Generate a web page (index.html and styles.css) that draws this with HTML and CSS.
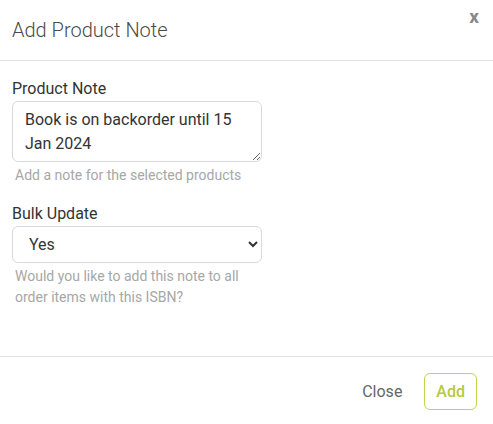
FILE: index.html
```html
<!DOCTYPE html>
<html lang="en">
<head>
<meta charset="utf-8">
<title>Add Product Note</title>
<link rel="stylesheet" href="styles.css">
</head>
<body>
<div class="modal">
  <div class="modal-header">
    <h4 class="modal-title">Add Product Note</h4>
    <button class="close" type="button">x</button>
  </div>
  <div class="modal-body">
    <div class="form-group">
      <label class="label" for="note">Product Note</label>
      <textarea id="note" class="control textarea">Book is on backorder until 15 Jan 2024</textarea>
      <div class="help">Add a note for the selected products</div>
    </div>
    <div class="form-group last">
      <label class="label" for="bulk">Bulk Update</label>
      <select id="bulk" class="control select">
        <option>Yes</option>
        <option>No</option>
      </select>
      <div class="help">Would you like to add this note to all<br>order items with this ISBN?</div>
    </div>
  </div>
  <div class="modal-footer">
    <button class="btn btn-close" type="button">Close</button>
    <button class="btn btn-add" type="button">Add</button>
  </div>
</div>
</body>
</html>
```

FILE: styles.css
```css
* { box-sizing: border-box; }

html, body {
  margin: 0;
  padding: 0;
  background: #fff;
}

body {
  font-family: Roboto, "Liberation Sans", Arial, sans-serif;
  font-size: 16px;
  line-height: 24px;
  color: #333;
}

.modal {
  position: relative;
  width: 493px;
}

.modal-header {
  padding: 15px 12px 15px;
  border-bottom: 1px solid #e1e3e6;
}

.modal-title {
  margin: 0;
  font-size: 20px;
  font-weight: 300;
  line-height: 30px;
  color: #4a4a4a;
}

.close {
  position: absolute;
  top: 7px;
  right: 14px;
  padding: 0;
  border: 0;
  background: none;
  font-family: Roboto, "Liberation Sans", Arial, sans-serif;
  font-size: 19px;
  font-weight: 700;
  line-height: 19px;
  color: #888;
  cursor: pointer;
}

.modal-body {
  padding: 16px 12px 48px;
}

.form-group {
  margin-bottom: 16px;
}

.form-group.last {
  margin-bottom: 0;
}

.label {
  display: block;
  font-size: 16px;
  line-height: 24px;
  color: #333;
}

.control {
  display: block;
  width: 250px;
  margin: 0;
  border: 1px solid #d6d9dd;
  border-radius: 6px;
  background: #fff;
  font-family: Roboto, "Liberation Sans", Arial, sans-serif;
  font-size: 16px;
  line-height: 24px;
  color: #333;
}

.textarea {
  height: 61px;
  padding: 6px 12px;
  resize: vertical;
  overflow: hidden;
}

.select {
  height: 37px;
  padding: 0 12px;
}

.help {
  margin-top: 3px;
  padding-left: 3px;
  font-size: 14px;
  line-height: 21px;
  color: #a7a7a7;
}

.modal-footer {
  display: flex;
  justify-content: flex-end;
  gap: 9px;
  padding: 16px;
  border-top: 1px solid #e1e3e6;
}

.btn {
  height: 37px;
  padding: 6px 12px;
  border: 1px solid transparent;
  border-radius: 6px;
  background: #fff;
  font-family: Roboto, "Liberation Sans", Arial, sans-serif;
  font-size: 16px;
  line-height: 24px;
  cursor: pointer;
}

.btn-close {
  color: #666;
}

.btn-add {
  padding: 6px 11px;
  border-color: #c2d44e;
  color: #b6ca3a;
  font-weight: 500;
}
```
